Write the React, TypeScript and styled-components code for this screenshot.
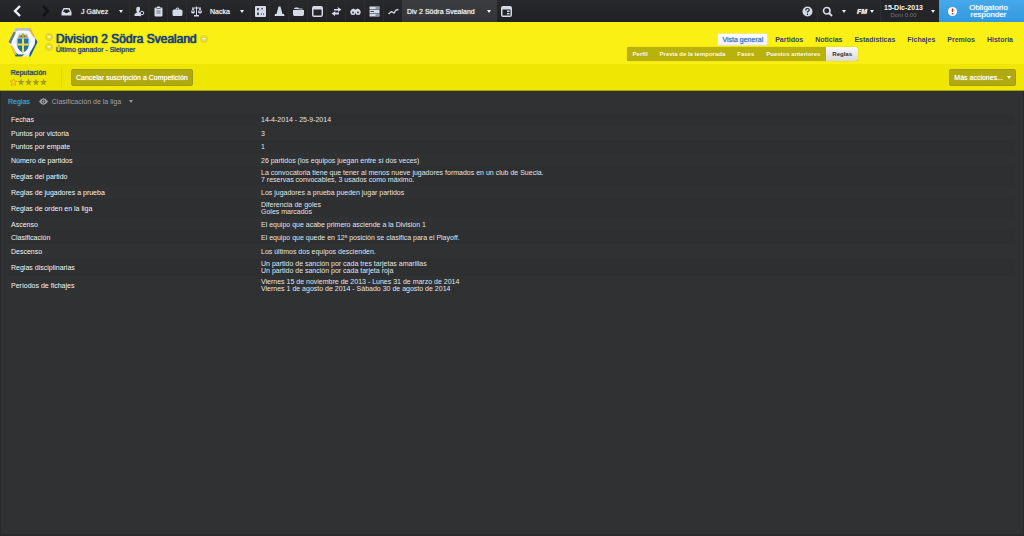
import React from 'react';
import styled, { createGlobalStyle, css } from 'styled-components';

const GlobalStyle = createGlobalStyle`
  * { box-sizing: border-box; }
  body {
    margin: 0;
    background: #2f3133;
    font-family: "Liberation Sans", Arial, sans-serif;
    font-size: 7px;
    line-height: 7px;
  }
  button {
    margin: 0;
    padding: 0;
    border: 0;
    background: none;
    color: inherit;
    font: inherit;
    cursor: pointer;
  }
  a { color: inherit; text-decoration: none; }
  svg { display: block; flex: none; }
`;

const semiBold = css`
  text-shadow: 0 0 1px currentColor;
`;

const Page = styled.div`
  min-height: 100vh;
  display: flex;
  flex-direction: column;
  background: #2f3133;
`;

/* ---------- top bar ---------- */

const TopBar = styled.nav`
  display: flex;
  height: 22px;
  background: linear-gradient(#27292c, #1f2123);
  color: #eceef3;
`;

const IconButton = styled.button<{ $width?: number; $line?: boolean }>`
  width: ${({ $width }) => $width ?? 19}px;
  flex: none;
  display: flex;
  align-items: center;
  justify-content: center;
  ${({ $line }) => $line && css`border-left: 1px solid #2a2c2f;`}
`;

const MenuButton = styled.button<{ $width: number; $active?: boolean }>`
  width: ${({ $width }) => $width}px;
  flex: none;
  display: flex;
  align-items: center;
  justify-content: space-between;
  padding: 0 6px 0 5px;
  white-space: nowrap;
  ${semiBold}
  ${({ $active }) => $active && css`background: linear-gradient(#3b3d40, #323437);`}
`;

const Spacer = styled.div`
  flex: 1;
`;

const DateButton = styled.button`
  width: 59px;
  flex: none;
  display: flex;
  align-items: center;
  justify-content: space-between;
  padding: 0 4px 0 3px;
  border-left: 1px solid #2c2e31;
  background: #232528;
`;

const DateText = styled.span`
  display: flex;
  flex-direction: column;
  align-items: center;
  font-weight: 700;
  line-height: 8px;
  color: #f5f6f8;
  white-space: nowrap;
`;

const TimeText = styled.small`
  font-size: 6px;
  font-weight: 400;
  line-height: 7px;
  color: #74777b;
`;

const RespondButton = styled.button`
  width: 85px;
  flex: none;
  display: flex;
  align-items: center;
  gap: 10px;
  padding: 0 14px 0 9px;
  background: linear-gradient(#45a9ea, #3398dd);
  color: #f0f8ff;
  font-size: 8px;
  line-height: 7px;
  ${semiBold}
`;

const RespondText = styled.span`
  flex: 1;
`;

const CaretShape = styled.span<{ $color?: string }>`
  width: 0;
  height: 0;
  flex: none;
  border: solid transparent;
  border-width: 3px 2px 0;
  border-top-color: ${({ $color }) => $color ?? '#eceef3'};
`;

/* ---------- yellow header ---------- */

const Header = styled.header`
  background: #faf013;
  color: #1c3f7c;
`;

const TitleRow = styled.div`
  display: flex;
  justify-content: space-between;
  min-height: 42px;
  padding: 0 6px 0 8px;
`;

const Identity = styled.div`
  display: flex;
  align-items: flex-start;
  padding-top: 5px;
`;

const Switcher = styled.div`
  display: flex;
  flex-direction: column;
  gap: 2px;
  margin: 6px 3px 0 7px;
`;

const RoundButton = styled.button`
  width: 8px;
  height: 8px;
  display: flex;
  align-items: center;
  justify-content: center;
  border: 1px solid #dccf3a;
  border-radius: 50%;
  background: #e9dd35;
`;

const SmallCaret = styled(CaretShape)`
  border-width: 2px 2px 0;
`;

const Titles = styled.div`
  padding-top: 5px;
`;

const TitleLine = styled.div`
  display: flex;
  align-items: center;
  gap: 3px;
`;

const Title = styled.h1`
  margin: 0;
  font-size: 12px;
  line-height: 14px;
  font-weight: 400;
  white-space: nowrap;
  text-shadow: 0 0 1px currentColor, 0 0 1px currentColor;
`;

const Subtitle = styled.p`
  margin: 0;
  line-height: 7px;
  white-space: nowrap;
  ${semiBold}
`;

const Navigation = styled.nav`
  display: flex;
  flex-direction: column;
  padding-top: 11px;
`;

const MainTabs = styled.div`
  display: flex;
  justify-content: flex-end;
  gap: 2px;
`;

const MainTab = styled.a<{ $active?: boolean }>`
  height: 13px;
  padding: 0 4px;
  border: 1px solid transparent;
  border-radius: 2px;
  line-height: 12px;
  font-weight: 700;
  color: #36466a;
  white-space: nowrap;
  ${({ $active }) => $active && css`
    border-color: #f0e88a;
    background: linear-gradient(#ffffff, #eef0f6);
    font-weight: 400;
    color: #3c78c8;
    ${semiBold}
  `}
`;

const SubTabs = styled.div`
  align-self: flex-start;
  display: flex;
  height: 14px;
  margin: 1px 160px 0 0;
  border-radius: 2px;
  background: #b9b20d;
  box-shadow: 0 0 1px #8f8a0c;
`;

const SubTab = styled.a<{ $active?: boolean }>`
  padding: 0 6px;
  font-size: 6px;
  font-weight: 700;
  line-height: 14px;
  color: #fdfbdc;
  white-space: nowrap;
  ${({ $active }) => $active && css`
    border-radius: 0 2px 2px 0;
    background: linear-gradient(#fafafa, #d9d9de);
    color: #2f3036;
  `}
`;

const ActionRow = styled.div`
  display: flex;
  align-items: center;
  height: 27px;
  padding: 0 8px 0 10px;
  border-bottom: 1px solid #a9a40f;
  background: #f0e603;
`;

const Reputation = styled.div`
  display: flex;
  flex-direction: column;
  align-items: center;
  gap: 2px;
  width: 37px;
  ${semiBold}
`;

const Divider = styled.span`
  width: 1px;
  height: 20px;
  margin: 0 9px 0 14px;
  background: #e0d60b;
`;

const ActionButton = styled.button`
  display: flex;
  align-items: center;
  gap: 4px;
  height: 17px;
  padding: 0 4px;
  border: 1px solid #a39c12;
  border-radius: 2px;
  background: #b0a910;
  color: #fffdea;
  white-space: nowrap;
  ${semiBold}
`;

/* ---------- rules ---------- */

const Content = styled.main`
  flex: 1;
  padding: 6px 8px 0 7px;
  border: solid #28292b;
  border-width: 0 1px 2px;
  color: #f4f5f7;
`;

const PanelBar = styled.div`
  display: flex;
  align-items: center;
  height: 8px;
  margin-bottom: 8px;
`;

const PanelTitle = styled.h2`
  margin: 0 9px 0 0;
  font-size: 7px;
  font-weight: 400;
  color: #3d97c4;
  ${semiBold}
`;

const ViewButton = styled.button`
  display: flex;
  align-items: center;
  gap: 4px;
  color: #a0a2a7;
`;

const ViewLabel = styled.span`
  margin-right: 4px;
`;

const RulesTable = styled.table`
  width: 100%;
  border-collapse: collapse;
  table-layout: fixed;
`;

const RuleRow = styled.tr<{ $double: boolean }>`
  height: ${({ $double }) => ($double ? 18 : 14)}px;
  &:nth-child(odd) {
    height: ${({ $double }) => ($double ? 18 : 13)}px;
    background: #2d2f31;
  }
`;

const RuleName = styled.th`
  width: 250px;
  padding: 0 0 0 3px;
  font-weight: 400;
  text-align: left;
`;

const RuleValue = styled.td`
  padding: 0 0 0 3px;
  color: #e0e5eb;
`;

const rules: { name: string; value: string[] }[] = [
  { name: 'Fechas', value: ['14-4-2014 - 25-9-2014'] },
  { name: 'Puntos por victoria', value: ['3'] },
  { name: 'Puntos por empate', value: ['1'] },
  { name: 'Número de partidos', value: ['26 partidos (los equipos juegan entre sí dos veces)'] },
  {
    name: 'Reglas del partido',
    value: [
      'La convocatoria tiene que tener al menos nueve jugadores formados en un club de Suecia.',
      '7 reservas convocables, 3 usados como máximo.',
    ],
  },
  { name: 'Reglas de jugadores a prueba', value: ['Los jugadores a prueba pueden jugar partidos'] },
  { name: 'Reglas de orden en la liga', value: ['Diferencia de goles', 'Goles marcados'] },
  { name: 'Ascenso', value: ['El equipo que acabe primero asciende a la Division 1'] },
  { name: 'Clasificación', value: ['El equipo que quede en 12ª posición se clasifica para el Playoff.'] },
  { name: 'Descenso', value: ['Los últimos dos equipos descienden.'] },
  {
    name: 'Reglas disciplinarias',
    value: [
      'Un partido de sanción por cada tres tarjetas amarillas',
      'Un partido de sanción por cada tarjeta roja',
    ],
  },
  {
    name: 'Períodos de fichajes',
    value: [
      'Viernes 15 de noviembre de 2013 - Lunes 31 de marzo de 2014',
      'Viernes 1 de agosto de 2014 - Sábado 30 de agosto de 2014',
    ],
  },
];

/* ---------- drawings ---------- */

const Icon = ({ children, size = 11 }: { children: React.ReactNode; size?: number }) => (
  <svg width={size} height={size} viewBox="0 0 22 22" fill="#d6d9e6" aria-hidden="true">
    {children}
  </svg>
);

const Chevron = ({ flip, color }: { flip?: boolean; color: string }) => (
  <svg width="9" height="12" viewBox="0 0 9 12" fill="none" stroke={color} strokeWidth="2.4" aria-hidden="true">
    <path d={flip ? 'M2 1l5 5-5 5' : 'M7 1L2 6l5 5'} />
  </svg>
);

const toolIcons: { label: string; art: React.ReactNode }[] = [
  {
    label: 'Tácticas',
    art: (
      <>
        <rect x="0" y="0" width="22" height="22" rx="2" />
        <path d="M6 4v5M6 13v5M4 6h4M14 4v3M12 16h2M16 16h2M4 16h4" stroke="#25272a" strokeWidth="2.400" fill="none" />
      </>
    ),
  },
  { label: 'Entrenamiento', art: <path d="M9 1h4l4 15h3l1 4H1l1-4h3z" /> },
  { label: 'Carpeta', art: <path d="M0 8h22v8q0 4-3 4H3q-3 0-3-4zM2 6q0-3 3-3h5l2 2h5q3 0 3 2z" /> },
  {
    label: 'Calendario',
    art: <path fillRule="evenodd" d="M4 0h14q4 0 4 4v14q0 4-4 4H4q-4 0-4-4V4q0-4 4-4zM3 7v12h16V7z" />,
  },
  {
    label: 'Traspasos',
    art: <path d="M13 2l8 5-7 5V9H6V6h8zM9 10L1 15l7 5v-3h8v-4H8z" />,
  },
  {
    label: 'Ojeadores',
    art: (
      <>
        <path d="M1 10q2-5 6-5l3 2h2l3-2q4 0 6 5v3H1z" />
        <circle cx="6" cy="13" r="5" />
        <circle cx="16" cy="13" r="5" />
        <circle cx="6" cy="13" r="2" fill="#3a3c40" />
        <circle cx="16" cy="13" r="2" fill="#3a3c40" />
      </>
    ),
  },
  {
    label: 'Plantilla',
    art: (
      <>
        <path d="M1 1h20v6H1zM1 8h20v6H1zM1 15h20v6H1z" />
        <path d="M13 4h7M3 11h7M13 18h7" stroke="#4a4c51" strokeWidth="2" />
      </>
    ),
  },
  {
    label: 'Estadísticas',
    art: <path d="M1 16l6-5 5 3 4-6 5-1" fill="none" stroke="#d6d9e6" strokeWidth="2.600" />,
  },
];

const Badge = () => (
  <svg width="30" height="31" viewBox="0 0 60 62" role="img" aria-label="Escudo">
    <path d="M15 2h30l14 28-14 29H15L1 30z" fill="#e9ecef" />
    <path d="M15 2h30l4 8-14-3H21L11 11z" fill="#b9c2c8" />
    <path d="M1 30l10-20 5 1L6 34z" fill="#5d7f94" />
    <path d="M42 59h3l14-29-4-8-2 14-9 15z" fill="#1c5f80" />
    <path d="M15 59L9 46l6 4 6 5h12l-6 4z" fill="#2b6785" />
    <path d="M45 2l10 20-4-2-10-15z" fill="#dfb93c" />
    <path d="M4 36l9 20 5-1L9 38z" fill="#efc630" />
    <path d="M18 8h24l12 22-12 23H18L7 30z" fill="#f8f9fa" />
    <path d="M22 12h16l8 18-9 18H23l-9-18z" fill="#dde3e8" />
    <path d="M19 23h22v16q-2 8-11 12-9-4-11-12z" fill="#1d74ae" />
    <path d="M28 23h4v28l-2 1-2-1zM19 33h22v4H19z" fill="#f8dc3b" />
    <path d="M20 22l2-7 4 2 4-5 4 5 4-2 2 7z" fill="#b5a45a" />
    <path d="M25 17h3v3h-3zM32 17h3v3h-3z" fill="#34779a" />
  </svg>
);

const Stars = () => (
  <svg width="37" height="8" viewBox="0 0 74 16" role="img" aria-label="1 de 5 estrellas">
    {[0, 1, 2, 3, 4].map((i) => (
      <path
        key={i}
        transform={`translate(${i * 15} 0)`}
        d="M7 1l2 5h5l-4 3.500 1.500 5.500L7 12l-4.500 3L4 9.500 0 6h5z"
        fill={i === 0 ? '#f5dd18' : '#a49d22'}
        stroke={i === 0 ? '#c98a1c' : 'none'}
      />
    ))}
  </svg>
);

const mainTabs = ['Vista general', 'Partidos', 'Noticias', 'Estadísticas', 'Fichajes', 'Premios', 'Historia'];
const subTabs = ['Perfil', 'Previa de la temporada', 'Fases', 'Puestos anteriores', 'Reglas'];

const RoundCaret = ({ label }: { label: string }) => (
  <RoundButton aria-label={label}>
    <SmallCaret $color="#fffbd0" />
  </RoundButton>
);

export default function App() {
  return (
    <Page>
      <GlobalStyle />
      <TopBar>
        <IconButton $width={34} aria-label="Atrás"><Chevron color="#eceef5" /></IconButton>
        <IconButton $width={22} aria-label="Adelante"><Chevron flip color="#111214" /></IconButton>
        <IconButton $width={20} aria-label="Bandeja de entrada">
          <Icon>
            <path fillRule="evenodd" d="M5 4h12l4 8v6q0 1-1 1H2q-1 0-1-1v-6zM6.500 7L4 12h3l2 2h4l2-2h3l-2.500-5z" />
          </Icon>
        </IconButton>
        <MenuButton $width={53}>J Gálvez<CaretShape /></MenuButton>
        <IconButton aria-label="Jugadores" $line>
          <Icon>
            <path d="M5 3q4-3 7 0 1 4-2 8l2 3v6H1v-4l5-3q-3-5-1-10z" />
            <circle cx="16" cy="14" r="3.500" fill="none" stroke="#d6d9e6" strokeWidth="2" />
            <path d="M13 16l-2 4 2 1 2-4z" />
          </Icon>
        </IconButton>
        <IconButton aria-label="Informe" $line>
          <Icon>
            <path d="M5 3h3V1h6v2h3q2 0 2 2v14q0 2-2 2H5q-2 0-2-2V5q0-2 2-2z" />
            <path d="M7 5h8M7 10h8M7 14h8" stroke="#55585f" strokeWidth="1.600" />
          </Icon>
        </IconButton>
        <IconButton aria-label="Trabajo" $line>
          <Icon>
            <path fillRule="evenodd" d="M7 7q0-4 4-4t4 4h3q3 0 3 3v7q0 3-3 3H4q-3 0-3-3v-7q0-3 3-3zM9 7h4q0-2-2-2T9 7z" />
          </Icon>
        </IconButton>
        <IconButton aria-label="Comparar" $line>
          <Icon>
            <path d="M10 1h2v2h8v2h-1l3 7q-1 3-4 3t-4-3l3-7h-5v13h4v3H6v-3h4V5H5l3 7q-1 3-4 3t-4-3l3-7H2V3h8z" />
            <path d="M4 7l-2 4h4zM18 7l-2 4h4z" fill="#25272a" />
          </Icon>
        </IconButton>
        <MenuButton $width={45}>Nacka<CaretShape /></MenuButton>
        {toolIcons.map(({ label, art }) => (
          <IconButton key={label} aria-label={label} $line>
            <Icon>{art}</Icon>
          </IconButton>
        ))}
        <MenuButton $width={95} $active>Div 2 Södra Svealand<CaretShape /></MenuButton>
        <IconButton aria-label="Panel">
          <Icon>
            <path fillRule="evenodd" d="M4 0h14q4 0 4 4v14q0 4-4 4H4q-4 0-4-4V4q0-4 4-4zM3 7v12h16V7z" />
            <path d="M12 9h5v3h-5zM12 14h5v3h-5z" />
          </Icon>
        </IconButton>
        <Spacer />
        <IconButton aria-label="Ayuda">
          <Icon>
            <circle cx="11" cy="11" r="10" />
            <path d="M7.500 9q0-4 3.500-4t3.500 3q0 2-3.500 3.500V13M11 15v3" fill="none" stroke="#25272a" strokeWidth="2.400" />
          </Icon>
        </IconButton>
        <IconButton aria-label="Buscar" $line>
          <Icon>
            <g fill="none" stroke="#d6d9e6" strokeWidth="3.200">
              <circle cx="9.500" cy="9.500" r="6.500" />
              <path d="M14 14l6 6" strokeWidth="4" />
            </g>
          </Icon>
        </IconButton>
        <IconButton $width={16} aria-label="Opciones de búsqueda"><CaretShape /></IconButton>
        <MenuButton $width={28}><em><b>FM</b></em><CaretShape /></MenuButton>
        <DateButton>
          <DateText>15-Dic-2013<TimeText>Dom 0:00</TimeText></DateText>
          <CaretShape />
        </DateButton>
        <RespondButton>
          <svg width="9" height="9" viewBox="0 0 18 18" aria-hidden="true">
            <circle cx="9" cy="9" r="9" fill="#fff" />
            <path d="M9 3v7M9 12v3" stroke="#d92a33" strokeWidth="3" />
          </svg>
          <RespondText>Obligatorio responder</RespondText>
        </RespondButton>
      </TopBar>

      <Header>
        <TitleRow>
          <Identity>
            <Badge />
            <Switcher>
              <RoundCaret label="Competición anterior" />
              <RoundCaret label="Competición siguiente" />
            </Switcher>
            <Titles>
              <TitleLine>
                <Title>Division 2 Södra Svealand</Title>
                <RoundCaret label="Más competiciones" />
              </TitleLine>
              <Subtitle>Último ganador - Sleipner</Subtitle>
            </Titles>
          </Identity>
          <Navigation>
            <MainTabs>
              {mainTabs.map((tab, i) => (
                <MainTab key={tab} href="#" $active={i === 0}>{tab}</MainTab>
              ))}
            </MainTabs>
            <SubTabs>
              {subTabs.map((tab) => (
                <SubTab key={tab} href="#" $active={tab === 'Reglas'}>{tab}</SubTab>
              ))}
            </SubTabs>
          </Navigation>
        </TitleRow>
        <ActionRow>
          <Reputation>Reputación<Stars /></Reputation>
          <Divider />
          <ActionButton>Cancelar suscripción a Competición</ActionButton>
          <Spacer />
          <ActionButton>Más acciones...<CaretShape $color="#fffdea" /></ActionButton>
        </ActionRow>
      </Header>

      <Content>
        <PanelBar>
          <PanelTitle>Reglas</PanelTitle>
          <ViewButton>
            <svg width="9" height="7" viewBox="0 0 18 14" aria-hidden="true">
              <path d="M0 7q9-13 18 0-9 13-18 0z" fill="#a5a7ab" />
              <circle cx="9" cy="7" r="3" fill="none" stroke="#2f3133" strokeWidth="2" />
            </svg>
            <ViewLabel>Clasificación de la liga</ViewLabel>
            <CaretShape $color="#93959a" />
          </ViewButton>
        </PanelBar>
        <RulesTable>
          <tbody>
            {rules.map(({ name, value }) => (
              <RuleRow key={name} $double={value.length > 1}>
                <RuleName scope="row">{name}</RuleName>
                <RuleValue>
                  {value.map((line) => <div key={line}>{line}</div>)}
                </RuleValue>
              </RuleRow>
            ))}
          </tbody>
        </RulesTable>
      </Content>
    </Page>
  );
}
